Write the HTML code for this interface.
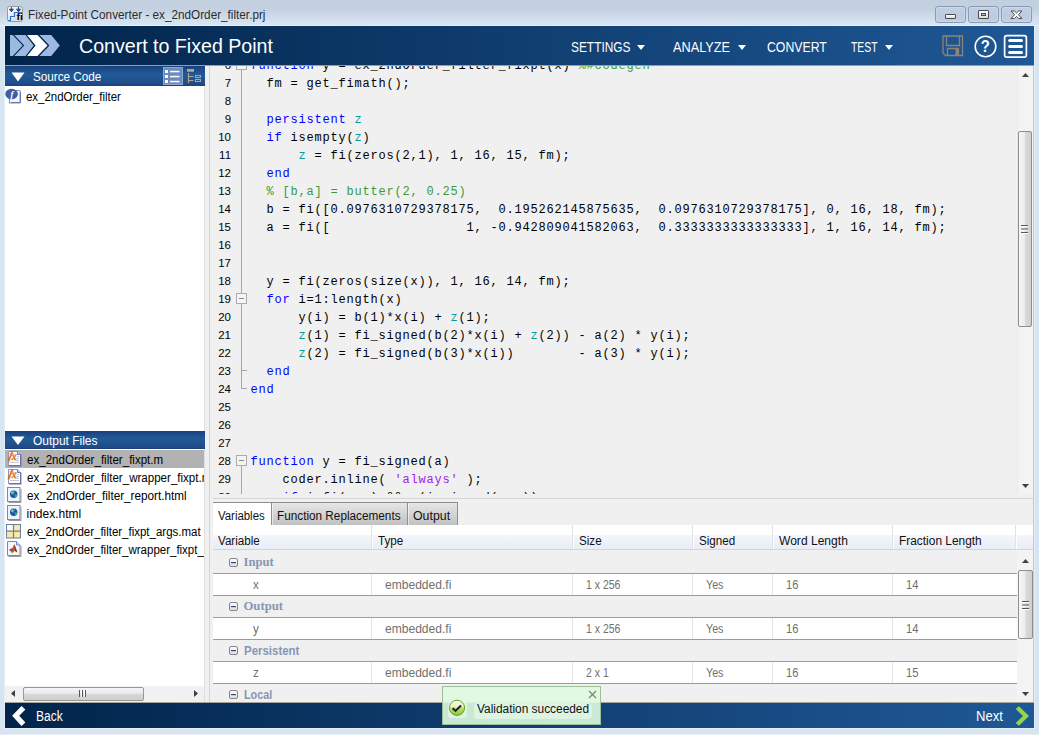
<!DOCTYPE html>
<html><head><meta charset="utf-8"><title>Fixed-Point Converter</title>
<style>
*{box-sizing:border-box}
html,body{margin:0;padding:0}
body{width:1039px;height:735px;overflow:hidden;position:relative;background:#d7e4f2;font-family:"Liberation Sans", sans-serif;font-size:12px;color:#000}
.abs{position:absolute}
.t{position:absolute;white-space:pre;transform-origin:0 50%;line-height:1}
#titlebar{left:0;top:0;width:1039px;height:26px;background:linear-gradient(#c2cfde 0px,#c4d1e0 10px,#c9d6e6 13px,#d3dfee 20px,#d8e5f2 25px,#e6eef8 25px,#e6eef8 26px)}
#toolbar{left:5px;top:26px;width:1029px;height:39px;background:linear-gradient(90deg,#01244a 0%,#1f5896 100%)}
#tbline{left:5px;top:65px;width:1029px;height:1px;background:#9c9c9a}
#content{left:5px;top:66px;width:1029px;height:637px;background:#f0f0f0}
#bottombar{left:5px;top:703px;width:1029px;height:25px;background:linear-gradient(90deg,#01244a 0%,#1f5896 100%)}
#bbline{left:5px;top:702px;width:1029px;height:1px;background:#a9a59c}
.wbtn{position:absolute;top:6px;width:31px;height:17px;border:1px solid #8b9bb7;border-radius:3px;background:linear-gradient(#c2d0e3,#bccbe0 60%,#c0cee3);box-shadow:inset 0 0 0 1px rgba(255,255,255,.18)}
.hdr{position:absolute;left:5px;width:200px;background:linear-gradient(#1b3f7c 0,#1f4e8d 22%,#1f5b99 42%,#1f5593 60%,#1f4a87 92%,#163d7a 100%)}
.hdr .t{color:#fff;font-size:13px}
.lp{position:absolute;left:5px;width:200px;background:#fff}
.file{position:absolute;left:5px;width:200px;height:18px;overflow:hidden}
.file .t{left:21.500px;top:4px;font-size:12px}
.tbt{color:#fff;font-size:14px}
.code{font-family:"Liberation Mono", monospace;font-size:12px;letter-spacing:.799px;position:absolute;left:250.5px;white-space:pre;line-height:18px;height:18px;color:#000}
.ln{position:absolute;width:30px;left:201.5px;text-align:right;font-size:11px;line-height:18px;height:18px;color:#000;transform:scaleX(1.04);transform-origin:100% 50%}
.k{color:#0000ff} .p{color:#0a9a9a} .c{color:#3a9a3a} .s{color:#a020f0}
</style></head>
<body>
<div id="titlebar" class="abs"></div>
<div class="abs" style="left:4px;top:26px;width:1031px;height:703px;background:#e5edf7"></div>
<div class="abs" style="left:0;top:734px;width:1039px;height:1px;background:#e8ecf2"></div>
<svg class="abs" style="left:7px;top:6px" width="16" height="16" viewBox="0 0 16 16">
<defs><linearGradient id="ig" x1="0" y1="0" x2="1" y2="1"><stop offset="0" stop-color="#ffffff"/><stop offset="1" stop-color="#d4d4d4"/></linearGradient></defs>
<rect x="0.5" y="0.5" width="15" height="15" rx="2" fill="url(#ig)" stroke="#9a9a9a"/>
<path d="M1 14.5H3.5V10.5H7.5V6.5H15" fill="none" stroke="#2f6fcf" stroke-width="1.2"/>
<path d="M4.4 1v3M2.4 3.2h4l-2 2.6z M11.5 1v3M9.5 3.2h4l-2 2.6z" fill="#1f4e8c" stroke="#1f4e8c" stroke-width="1"/>
<g transform="translate(9.500,13.900) scale(1.250,1)" font-family="Liberation Sans, sans-serif" font-weight="700" font-size="8.300" fill="#000"><text x="0" y="0">f</text><text x="2.800" y="0">i</text></g>
</svg>
<div class="t" id="title" style="left:27.500px;top:9px;font-size:12px;color:#2b2b2b;transform:scaleX(.978)">Fixed-Point Converter - ex_2ndOrder_filter.prj</div>
<div class="wbtn" style="left:935px"><div class="abs" style="left:9px;top:7px;width:11px;height:5px;background:linear-gradient(#fff,#dcdcdc);border:1px solid #4b4b4b;border-radius:1px"></div></div>
<div class="wbtn" style="left:968px"><div class="abs" style="left:9px;top:3px;width:11px;height:9px;background:linear-gradient(#fff,#dcdcdc);border:1px solid #4b4b4b;border-radius:1px"></div><div class="abs" style="left:12px;top:6px;width:5px;height:3px;background:#b9c9e0;border:1px solid #4b4b4b"></div></div>
<div class="wbtn" style="left:1001px"><svg class="abs" style="left:8px;top:3px" width="13" height="10" viewBox="0 0 13 10"><path d="M1 1h3.400l2.100 2L8.600 1H12L8.400 4.700 12 8.500H8.600L6.500 6.400 4.400 8.500H1L4.600 4.700z" fill="#fff" stroke="#4b4b4b" stroke-width="1" stroke-linejoin="round"/></svg></div>
<div id="toolbar" class="abs"></div>
<div id="tbline" class="abs"></div>
<svg class="abs" style="left:5px;top:26px" width="70" height="39" viewBox="5 26 70 39">
<polygon points="10,35 12.700,35 22.700,45.5 12.700,56 10,56" fill="#9db9e1"/>
<polygon points="14.200,35 25.500,35 33.800,45.5 25.500,56 14.200,56 24.200,45.5" fill="#9db9e1"/>
<polygon points="27,35 37.500,35 47.500,45.5 37.500,56 27,56 35.600,45.5" fill="#ffffff"/>
<polygon points="39.400,35 51.200,35 59.800,45.5 51.200,56 39.400,56 49.400,45.5" fill="#9db9e1"/>
</svg>
<div class="t" id="ctfp" style="left:78.600px;top:36px;font-size:20px;color:#fff;transform:scaleX(.98)">Convert to Fixed Point</div>
<div class="t tbt" id="m1" style="left:570.700px;top:40px;transform:scaleX(.85)">SETTINGS</div>
<svg class="abs" style="left:637px;top:45px" width="8" height="5" viewBox="0 0 8 5"><polygon points="0,0 8,0 4.0,5" fill="#fff"/></svg>
<div class="t tbt" id="m2" style="left:672.500px;top:40px;transform:scaleX(.91)">ANALYZE</div>
<svg class="abs" style="left:738px;top:45px" width="8" height="5" viewBox="0 0 8 5"><polygon points="0,0 8,0 4.0,5" fill="#fff"/></svg>
<div class="t tbt" id="m3" style="left:767px;top:40px;transform:scaleX(.877)">CONVERT</div>
<div class="t tbt" id="m4" style="left:850.500px;top:40px;transform:scaleX(.74)">TEST</div>
<svg class="abs" style="left:885px;top:45px" width="8" height="5" viewBox="0 0 8 5"><polygon points="0,0 8,0 4.0,5" fill="#fff"/></svg>
<svg class="abs" style="left:942.300px;top:34.800px" width="22" height="22" viewBox="0 0 22 22">
<path d="M1 1h19.500v19.500H3.500L1 18z" fill="none" stroke="#8a8578" stroke-width="1.300"/>
<path d="M4.500 1v9.500h13V1" fill="none" stroke="#8a8578" stroke-width="1.300"/>
<path d="M5.500 20.500V13.500h11v7" fill="none" stroke="#8a8578" stroke-width="1.300"/>
<rect x="13.500" y="13.500" width="3" height="7" fill="#8a8578"/>
</svg>
<svg class="abs" style="left:973px;top:34px" width="25" height="25" viewBox="0 0 25 25">
<circle cx="12.500" cy="12.500" r="10.300" fill="none" stroke="#fff" stroke-width="1.600"/>
<text x="13.700" y="18.200" text-anchor="middle" font-family="Liberation Sans, sans-serif" font-weight="700" font-size="16.500" fill="#fff" transform="scale(.9,1)">?</text>
</svg>
<svg class="abs" style="left:1003px;top:34px" width="25" height="25" viewBox="0 0 25 25">
<rect x="1.600" y="1.600" width="21.800" height="21.600" rx="2.200" fill="none" stroke="#fff" stroke-width="1.700"/>
<rect x="5.200" y="5.100" width="14.800" height="3" rx="1.500" fill="#fff"/>
<rect x="5.200" y="11.100" width="14.800" height="3" rx="1.500" fill="#fff"/>
<rect x="5.200" y="17.100" width="14.800" height="3" rx="1.500" fill="#fff"/>
</svg>
<div id="content" class="abs"></div>
<div class="lp" style="top:86px;height:345px"></div>
<div class="lp" style="top:449px;height:237px"></div>
<div class="hdr" id="h1" style="top:66px;height:20px"><div class="t" style="left:28px;top:4px;transform:scaleX(.9)">Source Code</div><svg class="abs" style="left:6px;top:6px" width="14" height="10" viewBox="0 0 14 10"><polygon points="0.500,0.500 13.500,0.500 7,9.500" fill="#fff"/></svg></div>
<svg class="abs" style="left:163px;top:67px" width="20" height="18" viewBox="0 0 20 18">
<rect x="0.500" y="0.500" width="19" height="17" fill="#6d8cbe" stroke="#8fa8d0"/>
<rect x="2" y="3" width="3" height="3" fill="#fff"/><rect x="2" y="8" width="3" height="3" fill="#fff"/><rect x="2" y="13" width="3" height="3" fill="#fff"/>
<rect x="7" y="3.800" width="9.500" height="1.500" fill="#fff"/><rect x="7" y="8.800" width="9.500" height="1.500" fill="#fff"/><rect x="7" y="13.800" width="9.500" height="1.500" fill="#fff"/>
</svg>
<svg class="abs" style="left:186px;top:68px" width="17" height="16" viewBox="0 0 17 16">
<rect x="1" y="1" width="7" height="2.800" fill="#b3a58d"/>
<path d="M2.500 5v10M2.500 8.500h5M2.500 12.500h5" stroke="#b3a58d" stroke-width="1.200" fill="none"/>
<rect x="9.500" y="7.500" width="5" height="2" fill="none" stroke="#b3a58d" stroke-width="1"/>
<rect x="9.500" y="11.500" width="5" height="2" fill="none" stroke="#b3a58d" stroke-width="1"/>
</svg>
<svg class="abs" style="left:5px;top:88px" width="17" height="16" viewBox="0 0 17 16">
<rect x="4.500" y="2.500" width="10.500" height="12.500" fill="#f4f7fd" stroke="#8a90c8"/>
<path d="M6 14.500h9.500V4" stroke="#6d74a8" stroke-width="1" fill="none"/>
<ellipse cx="6.600" cy="6" rx="6.300" ry="5.200" fill="#3f5ca8"/>
<text x="5.400" y="9.100" font-family="Liberation Serif, serif" font-style="italic" font-weight="700" font-size="9" fill="#fff">f</text>
</svg>
<div class="t" id="src1" style="left:25.500px;top:90.500px;font-size:12px;transform:scaleX(.955)">ex_2ndOrder_filter</div>
<div class="hdr" id="h2" style="top:431px;height:18px"><div class="t" style="left:28px;top:3px;transform:scaleX(.92)">Output Files</div><svg class="abs" style="left:6px;top:5px" width="14" height="10" viewBox="0 0 14 10"><polygon points="0.500,0.500 13.500,0.500 7,9" fill="#fff"/></svg></div>
<div class="file" style="top:450px;background:#b2b2b2;"><svg class="abs" style="left:0;top:1px" width="17" height="16" viewBox="0 0 17 16">
<path d="M3.500 0.500H12.500L15.500 3.500V14.500H3.500z" fill="#ffffff" stroke="#8d93c6"/>
<path d="M12.500 0.500V3.500H15.500" fill="#cfd6f0" stroke="#6a6fae"/>
<path d="M15.700 3.500V14.800H3.800" fill="none" stroke="#6a6fae" stroke-width="1.400"/>
<path d="M8.500 3.500H12M12 5.500H14M10.500 7.500H14M10.500 9.500H14M5 11.500H14" stroke="#c4c6cf" stroke-width="1"/>
<text x="0" y="0" transform="translate(3.200,8.400) skewX(-12)" font-family="Liberation Serif, serif" font-style="italic" font-weight="700" font-size="12" fill="#e8700a" stroke="#e8700a" stroke-width="0.200">f</text>
<text x="6.800" y="9.200" font-family="Liberation Serif, serif" font-style="italic" font-weight="700" font-size="9.500" fill="#e8700a" stroke="#e8700a" stroke-width="0.300">x</text>
</svg><div class="t f0" style="transform:scaleX(0.963)">ex_2ndOrder_filter_fixpt.m</div></div>
<div class="file" style="top:468px;"><svg class="abs" style="left:0;top:1px" width="17" height="16" viewBox="0 0 17 16">
<path d="M3.500 0.500H12.500L15.500 3.500V14.500H3.500z" fill="#ffffff" stroke="#8d93c6"/>
<path d="M12.500 0.500V3.500H15.500" fill="#cfd6f0" stroke="#6a6fae"/>
<path d="M15.700 3.500V14.800H3.800" fill="none" stroke="#6a6fae" stroke-width="1.400"/>
<path d="M8.500 3.500H12M12 5.500H14M10.500 7.500H14M10.500 9.500H14M5 11.500H14" stroke="#c4c6cf" stroke-width="1"/>
<text x="0" y="0" transform="translate(3.200,8.400) skewX(-12)" font-family="Liberation Serif, serif" font-style="italic" font-weight="700" font-size="12" fill="#e8700a" stroke="#e8700a" stroke-width="0.200">f</text>
<text x="6.800" y="9.200" font-family="Liberation Serif, serif" font-style="italic" font-weight="700" font-size="9.500" fill="#e8700a" stroke="#e8700a" stroke-width="0.300">x</text>
</svg><div class="t f1" style="transform:scaleX(0.963)">ex_2ndOrder_filter_wrapper_fixpt.m</div></div>
<div class="file" style="top:486px;"><svg class="abs" style="left:0;top:1px" width="17" height="16" viewBox="0 0 17 16">
<rect x="2.500" y="0.500" width="12.500" height="14" fill="#eef3fc" stroke="#6f88c9"/>
<path d="M3.500 15.500h12.500V2" stroke="#9a9aa4" stroke-width="1" fill="none"/>
<circle cx="8.700" cy="7.300" r="3.700" fill="#1a50c0"/>
<path d="M5.800 5.600q1.600-2 3.600-1.400q.8 1.200-.4 2.200q-.4 1.600-1.600 1.200q-1.400-.2-1.600-2z M9.600 7.600q1.800-.6 2.600.2q-.2 2-1.800 2.600q-1-.8-.8-2.800z M6.400 9.400q1 .2 1.400 1.400q-1-.2-1.400-1.400z" fill="#3fb04a"/>
<circle cx="7.300" cy="5.700" r="1.100" fill="#cfe8ff" opacity=".55"/>
</svg><div class="t f2" style="transform:scaleX(0.977)">ex_2ndOrder_filter_report.html</div></div>
<div class="file" style="top:504px;"><svg class="abs" style="left:0;top:1px" width="17" height="16" viewBox="0 0 17 16">
<rect x="2.500" y="0.500" width="12.500" height="14" fill="#eef3fc" stroke="#6f88c9"/>
<path d="M3.500 15.500h12.500V2" stroke="#9a9aa4" stroke-width="1" fill="none"/>
<circle cx="8.700" cy="7.300" r="3.700" fill="#1a50c0"/>
<path d="M5.800 5.600q1.600-2 3.600-1.400q.8 1.200-.4 2.200q-.4 1.600-1.600 1.200q-1.400-.2-1.600-2z M9.600 7.600q1.800-.6 2.600.2q-.2 2-1.800 2.600q-1-.8-.8-2.800z M6.400 9.400q1 .2 1.400 1.400q-1-.2-1.400-1.400z" fill="#3fb04a"/>
<circle cx="7.300" cy="5.700" r="1.100" fill="#cfe8ff" opacity=".55"/>
</svg><div class="t f3" style="transform:scaleX(1.0)">index.html</div></div>
<div class="file" style="top:522px;"><svg class="abs" style="left:0;top:1px" width="17" height="16" viewBox="0 0 17 16">
<rect x="1.500" y="1.500" width="14" height="13.500" fill="#fbe9a2" stroke="#6b7fa6"/>
<rect x="2" y="2" width="6.500" height="6" fill="#fdfbf0"/>
<path d="M8.500 1.500v13.500M1.500 8.200h14" stroke="#6b7fa6" stroke-width="1.200"/>
</svg><div class="t f4" style="transform:scaleX(0.957)">ex_2ndOrder_filter_fixpt_args.mat</div></div>
<div class="file" style="top:540px;"><svg class="abs" style="left:0;top:1px" width="17" height="16" viewBox="0 0 17 16">
<path d="M2.500 0.500h9l3.500 3.500V14.500h-12.500z" fill="#f3f7fd" stroke="#6f88c9"/>
<path d="M11.500 0.500v3.500h3.500" fill="#dfe8f8" stroke="#6f88c9"/>
<path d="M3.500 15.500h12.500V5" stroke="#9a9aa4" stroke-width="1" fill="none"/>
<path d="M4 8.800l3.200-1.600 2.200-4 3 8.400-2.800-1.800-2.200 2.400z" fill="#d9541e"/>
<path d="M9.400 3.200l3 8.400-2.800-1.800z" fill="#8f3a14"/>
<path d="M4 8.800l3.200-1.600 1.200 3z" fill="#2f6fb8"/>
</svg><div class="t f5" style="transform:scaleX(0.957)">ex_2ndOrder_filter_wrapper_fixpt_mex.mexw64</div></div>
<div class="abs" style="left:5px;top:686px;width:200px;height:16px;background:#f1f1f1"></div>
<svg class="abs" style="left:10.500px;top:690px" width="4" height="7" viewBox="0 0 4 7"><polygon points="4,0 4,7 0,3.500" fill="#404040"/></svg>
<svg class="abs" style="left:193.500px;top:690px" width="4" height="7" viewBox="0 0 4 7"><polygon points="0,0 0,7 4,3.500" fill="#404040"/></svg>
<div class="abs" style="left:23px;top:686.500px;width:120.500px;height:14px;border:1px solid #979797;border-radius:2px;background:linear-gradient(#f6f6f6,#e9e9e9 45%,#d6d6d6 55%,#cfcfcf)"></div>
<div class="abs" style="left:79px;top:690px;width:1px;height:7px;background:#555;box-shadow:2px 0 0 #fff,3px 0 0 #555,5px 0 0 #fff,6px 0 0 #555"></div>
<div class="abs" style="left:204px;top:86px;width:1px;height:345px;background:#dedede"></div>
<div class="abs" style="left:204px;top:449px;width:1px;height:253px;background:#dedede"></div>
<div class="abs" style="left:209px;top:66px;width:1px;height:637px;background:#d4d4d4"></div>
<div class="abs" id="editor" style="left:210px;top:66px;width:807px;height:428px;overflow:hidden;background:#f0f0f0">
<div class="ln" style="left:-9px;top:-10.5px">6</div>
<div class="code" style="left:40.500px;top:-9.5px"><span class="k">function</span> y = ex_2ndOrder_filter_fixpt(x) <span class="c">%#codegen</span></div>
<div class="ln" style="left:-9px;top:7.5px">7</div>
<div class="code" style="left:40.500px;top:8.5px">  fm = get_fimath();</div>
<div class="ln" style="left:-9px;top:25.5px">8</div>
<div class="ln" style="left:-9px;top:43.5px">9</div>
<div class="code" style="left:40.500px;top:44.5px">  <span class="k">persistent</span> <span class="p">z</span></div>
<div class="ln" style="left:-9px;top:61.5px">10</div>
<div class="code" style="left:40.500px;top:62.5px">  <span class="k">if</span> isempty(<span class="p">z</span>)</div>
<div class="ln" style="left:-9px;top:79.5px">11</div>
<div class="code" style="left:40.500px;top:80.5px">      <span class="p">z</span> = fi(zeros(2,1), 1, 16, 15, fm);</div>
<div class="ln" style="left:-9px;top:97.5px">12</div>
<div class="code" style="left:40.500px;top:98.5px">  <span class="k">end</span></div>
<div class="ln" style="left:-9px;top:115.5px">13</div>
<div class="code" style="left:40.500px;top:116.5px">  <span class="c">% [b,a] = butter(2, 0.25)</span></div>
<div class="ln" style="left:-9px;top:133.5px">14</div>
<div class="code" style="left:40.500px;top:134.5px">  b = fi([0.0976310729378175,  0.195262145875635,  0.0976310729378175], 0, 16, 18, fm);</div>
<div class="ln" style="left:-9px;top:151.5px">15</div>
<div class="code" style="left:40.500px;top:152.5px">  a = fi([                 1, -0.942809041582063,  0.3333333333333333], 1, 16, 14, fm);</div>
<div class="ln" style="left:-9px;top:169.5px">16</div>
<div class="ln" style="left:-9px;top:187.5px">17</div>
<div class="ln" style="left:-9px;top:205.5px">18</div>
<div class="code" style="left:40.500px;top:206.5px">  y = fi(zeros(size(x)), 1, 16, 14, fm);</div>
<div class="ln" style="left:-9px;top:223.5px">19</div>
<div class="code" style="left:40.500px;top:224.5px">  <span class="k">for</span> i=1:length(x)</div>
<div class="ln" style="left:-9px;top:241.5px">20</div>
<div class="code" style="left:40.500px;top:242.5px">      y(i) = b(1)*x(i) + <span class="p">z</span>(1);</div>
<div class="ln" style="left:-9px;top:259.5px">21</div>
<div class="code" style="left:40.500px;top:260.5px">      <span class="p">z</span>(1) = fi_signed(b(2)*x(i) + <span class="p">z</span>(2)) - a(2) * y(i);</div>
<div class="ln" style="left:-9px;top:277.5px">22</div>
<div class="code" style="left:40.500px;top:278.5px">      <span class="p">z</span>(2) = fi_signed(b(3)*x(i))        - a(3) * y(i);</div>
<div class="ln" style="left:-9px;top:295.5px">23</div>
<div class="code" style="left:40.500px;top:296.5px">  <span class="k">end</span></div>
<div class="ln" style="left:-9px;top:313.5px">24</div>
<div class="code" style="left:40.500px;top:314.5px"><span class="k">end</span></div>
<div class="ln" style="left:-9px;top:331.5px">25</div>
<div class="ln" style="left:-9px;top:349.5px">26</div>
<div class="ln" style="left:-9px;top:367.5px">27</div>
<div class="ln" style="left:-9px;top:385.5px">28</div>
<div class="code" style="left:40.500px;top:386.5px"><span class="k">function</span> y = fi_signed(a)</div>
<div class="ln" style="left:-9px;top:403.5px">29</div>
<div class="code" style="left:40.500px;top:404.5px">    coder.inline( <span class="s">'always'</span> );</div>
<div class="ln" style="left:-9px;top:421.5px">30</div>
<div class="code" style="left:40.500px;top:422.5px">    <span class="k">if</span> isfi( a ) &amp;&amp; ~(issigned( a ))</div>
<div class="abs" style="left:31px;top:0px;width:1px;height:323px;background:#a6a6a6"></div>
<div class="abs" style="left:31px;top:304px;width:6px;height:1px;background:#a6a6a6"></div>
<div class="abs" style="left:31px;top:322px;width:6px;height:1px;background:#a6a6a6"></div>
<div class="abs" style="left:26px;top:-7px;width:11px;height:11px;border:1px solid #ababab;background:#f4f4f4"><div class="abs" style="left:2px;top:4px;width:5px;height:1px;background:#8a8a8a"></div></div>
<div class="abs" style="left:26px;top:227px;width:11px;height:11px;border:1px solid #ababab;background:#f4f4f4"><div class="abs" style="left:2px;top:4px;width:5px;height:1px;background:#8a8a8a"></div></div>
<div class="abs" style="left:31px;top:400px;width:1px;height:40px;background:#a6a6a6"></div>
<div class="abs" style="left:26px;top:389px;width:11px;height:11px;border:1px solid #ababab;background:#f4f4f4"><div class="abs" style="left:2px;top:4px;width:5px;height:1px;background:#8a8a8a"></div></div>
</div>
<div class="abs" style="left:1017px;top:66px;width:17px;height:428px;background:#f3f3f3;border-left:1px solid #e9e9e9"></div>
<svg class="abs" style="left:1022px;top:73px" width="7" height="4" viewBox="0 0 7 4"><polygon points="0,4 7,4 3.500,0" fill="#404040"/></svg>
<svg class="abs" style="left:1022px;top:484px" width="7" height="4" viewBox="0 0 7 4"><polygon points="0,0 7,0 3.500,4" fill="#404040"/></svg>
<div class="abs" style="left:1017.500px;top:131px;width:14.500px;height:196px;border:1px solid #8e8e8e;border-radius:2px;background:linear-gradient(90deg,#f7f7f7,#ececec 45%,#d9d9d9 55%,#cfcfcf)"></div>
<div class="abs" style="left:1021px;top:224.500px;width:7px;height:1px;background:#555;box-shadow:0 1px 0 #fff,0 3.500px 0 #555,0 4.500px 0 #fff,0 7px 0 #555,0 8px 0 #fff"></div>
<div class="abs" style="left:213px;top:498px;width:820px;height:1px;background:#d6d6d6"></div>
<div class="abs" style="left:213px;top:502px;width:244.500px;height:23px;border-top:1px solid #8f8f8f;background:linear-gradient(#e6e6e6,#c2c2c2)"></div>
<div class="abs" style="left:213px;top:503px;width:58px;height:22px;background:#fff"></div>
<div class="abs" style="left:270.500px;top:502px;width:1px;height:23px;background:#8f8f8f"></div>
<div class="abs" style="left:406.500px;top:502px;width:1px;height:23px;background:#8f8f8f"></div>
<div class="abs" style="left:457px;top:502px;width:1px;height:23px;background:#8f8f8f"></div>
<div class="abs" style="left:271.500px;top:503px;width:1px;height:22px;background:rgba(255,255,255,.55)"></div>
<div class="abs" style="left:407.500px;top:503px;width:1px;height:22px;background:rgba(255,255,255,.55)"></div>
<div class="t" id="tab1" style="left:218px;top:509.500px;font-size:12px;color:#111;transform:scaleX(.95)">Variables</div>
<div class="t" id="tab2" style="left:277px;top:509.500px;font-size:12px;color:#111;transform:scaleX(.98)">Function Replacements</div>
<div class="t" id="tab3" style="left:413px;top:509.500px;font-size:12px;color:#111;transform:scaleX(1.03)">Output</div>
<div class="abs" style="left:213px;top:525px;width:820px;height:24px;background:linear-gradient(#ffffff 0,#ffffff 40%,#f3f5fb 44%,#e9edf7 100%)"></div>
<div class="abs" style="left:213px;top:549px;width:820px;height:1px;background:#d5d5d5"></div>
<div class="t th0" style="left:218px;top:534.500px;font-size:12px;color:#111;transform:scaleX(0.97)">Variable</div>
<div class="t th1" style="left:378px;top:534.500px;font-size:12px;color:#111;transform:scaleX(0.97)">Type</div>
<div class="t th2" style="left:579px;top:534.500px;font-size:12px;color:#111;transform:scaleX(0.97)">Size</div>
<div class="t th3" style="left:699px;top:534.500px;font-size:12px;color:#111;transform:scaleX(0.97)">Signed</div>
<div class="t th4" style="left:779px;top:534.500px;font-size:12px;color:#111;transform:scaleX(1.005)">Word Length</div>
<div class="t th5" style="left:899px;top:534.500px;font-size:12px;color:#111;transform:scaleX(0.992)">Fraction Length</div>
<div class="abs" style="left:371px;top:525px;width:1px;height:24px;background:#e2e2e6"></div><div class="abs" style="left:372px;top:525px;width:1px;height:24px;background:#fff"></div>
<div class="abs" style="left:572px;top:525px;width:1px;height:24px;background:#e2e2e6"></div><div class="abs" style="left:573px;top:525px;width:1px;height:24px;background:#fff"></div>
<div class="abs" style="left:692px;top:525px;width:1px;height:24px;background:#e2e2e6"></div><div class="abs" style="left:693px;top:525px;width:1px;height:24px;background:#fff"></div>
<div class="abs" style="left:772px;top:525px;width:1px;height:24px;background:#e2e2e6"></div><div class="abs" style="left:773px;top:525px;width:1px;height:24px;background:#fff"></div>
<div class="abs" style="left:892px;top:525px;width:1px;height:24px;background:#e2e2e6"></div><div class="abs" style="left:893px;top:525px;width:1px;height:24px;background:#fff"></div>
<div class="abs" style="left:1015px;top:525px;width:1px;height:24px;background:#e2e2e6"></div><div class="abs" style="left:1016px;top:525px;width:1px;height:24px;background:#fff"></div>
<div class="abs" id="tbody" style="left:213px;top:550px;width:804px;height:152px;overflow:hidden;background:#f0f0f0">
<svg class="abs" width="0" height="0" style="left:0;top:0"><defs><linearGradient id="mg" x1="0" y1="0" x2="0" y2="1"><stop offset="0" stop-color="#fff"/><stop offset="1" stop-color="#dcdcdc"/></linearGradient></defs></svg>
<div class="abs" style="left:0;top:0px;width:804px;height:23px"><svg class="abs" style="left:16px;top:8px" width="9" height="9" viewBox="0 0 9 9"><rect x="0.500" y="0.500" width="8" height="8" rx="1.500" fill="url(#mg)" stroke="#868686"/><rect x="2" y="4" width="5" height="1.200" fill="#2b4c8c"/></svg><div class="t grp" style="left:30.500px;top:6px;font-family:'Liberation Serif',serif;font-weight:700;font-size:12.700px;color:#8797b2">Input</div></div>
<div class="abs" style="left:0;top:23px;width:804px;height:1px;background:#9c9c9c"></div>
<div class="abs" style="left:0;top:24px;width:804px;height:21px;background:#fff">
<div class="t td" style="left:40px;top:5px;font-size:12px;color:#707070;transform:scaleX(0.97)">x</div>
<div class="t td" style="left:172px;top:5px;font-size:12px;color:#707070;transform:scaleX(1.005)">embedded.fi</div>
<div class="abs" style="left:158px;top:0;width:1px;height:21px;background:#e4e4e4"></div>
<div class="t td" style="left:373px;top:5px;font-size:12px;color:#707070;transform:scaleX(0.875)">1 x 256</div>
<div class="abs" style="left:359px;top:0;width:1px;height:21px;background:#e4e4e4"></div>
<div class="t td" style="left:493px;top:5px;font-size:12px;color:#707070;transform:scaleX(0.89)">Yes</div>
<div class="abs" style="left:479px;top:0;width:1px;height:21px;background:#e4e4e4"></div>
<div class="t td" style="left:573px;top:5px;font-size:12px;color:#707070;transform:scaleX(0.93)">16</div>
<div class="abs" style="left:559px;top:0;width:1px;height:21px;background:#e4e4e4"></div>
<div class="t td" style="left:693px;top:5px;font-size:12px;color:#707070;transform:scaleX(0.93)">14</div>
<div class="abs" style="left:679px;top:0;width:1px;height:21px;background:#e4e4e4"></div>
</div>
<div class="abs" style="left:0;top:45px;width:804px;height:1px;background:#9c9c9c"></div>
<div class="abs" style="left:0;top:44px;width:804px;height:23px"><svg class="abs" style="left:16px;top:8px" width="9" height="9" viewBox="0 0 9 9"><rect x="0.500" y="0.500" width="8" height="8" rx="1.500" fill="url(#mg)" stroke="#868686"/><rect x="2" y="4" width="5" height="1.200" fill="#2b4c8c"/></svg><div class="t grp" style="left:30.500px;top:6px;font-family:'Liberation Serif',serif;font-weight:700;font-size:12.700px;color:#8797b2">Output</div></div>
<div class="abs" style="left:0;top:67px;width:804px;height:1px;background:#9c9c9c"></div>
<div class="abs" style="left:0;top:68px;width:804px;height:21px;background:#fff">
<div class="t td" style="left:40px;top:5px;font-size:12px;color:#707070;transform:scaleX(0.97)">y</div>
<div class="t td" style="left:172px;top:5px;font-size:12px;color:#707070;transform:scaleX(1.005)">embedded.fi</div>
<div class="abs" style="left:158px;top:0;width:1px;height:21px;background:#e4e4e4"></div>
<div class="t td" style="left:373px;top:5px;font-size:12px;color:#707070;transform:scaleX(0.875)">1 x 256</div>
<div class="abs" style="left:359px;top:0;width:1px;height:21px;background:#e4e4e4"></div>
<div class="t td" style="left:493px;top:5px;font-size:12px;color:#707070;transform:scaleX(0.89)">Yes</div>
<div class="abs" style="left:479px;top:0;width:1px;height:21px;background:#e4e4e4"></div>
<div class="t td" style="left:573px;top:5px;font-size:12px;color:#707070;transform:scaleX(0.93)">16</div>
<div class="abs" style="left:559px;top:0;width:1px;height:21px;background:#e4e4e4"></div>
<div class="t td" style="left:693px;top:5px;font-size:12px;color:#707070;transform:scaleX(0.93)">14</div>
<div class="abs" style="left:679px;top:0;width:1px;height:21px;background:#e4e4e4"></div>
</div>
<div class="abs" style="left:0;top:89px;width:804px;height:1px;background:#9c9c9c"></div>
<div class="abs" style="left:0;top:88px;width:804px;height:23px"><svg class="abs" style="left:16px;top:8px" width="9" height="9" viewBox="0 0 9 9"><rect x="0.500" y="0.500" width="8" height="8" rx="1.500" fill="url(#mg)" stroke="#868686"/><rect x="2" y="4" width="5" height="1.200" fill="#2b4c8c"/></svg><div class="t grp" style="left:30.500px;top:6.500px;font-family:'Liberation Sans',sans-serif;font-weight:700;font-size:12px;color:#8797b2;transform:scaleX(0.955)">Persistent</div></div>
<div class="abs" style="left:0;top:111px;width:804px;height:1px;background:#9c9c9c"></div>
<div class="abs" style="left:0;top:112px;width:804px;height:21px;background:#fff">
<div class="t td" style="left:40px;top:5px;font-size:12px;color:#707070;transform:scaleX(0.97)">z</div>
<div class="t td" style="left:172px;top:5px;font-size:12px;color:#707070;transform:scaleX(1.005)">embedded.fi</div>
<div class="abs" style="left:158px;top:0;width:1px;height:21px;background:#e4e4e4"></div>
<div class="t td" style="left:373px;top:5px;font-size:12px;color:#707070;transform:scaleX(0.875)">2 x 1</div>
<div class="abs" style="left:359px;top:0;width:1px;height:21px;background:#e4e4e4"></div>
<div class="t td" style="left:493px;top:5px;font-size:12px;color:#707070;transform:scaleX(0.89)">Yes</div>
<div class="abs" style="left:479px;top:0;width:1px;height:21px;background:#e4e4e4"></div>
<div class="t td" style="left:573px;top:5px;font-size:12px;color:#707070;transform:scaleX(0.93)">16</div>
<div class="abs" style="left:559px;top:0;width:1px;height:21px;background:#e4e4e4"></div>
<div class="t td" style="left:693px;top:5px;font-size:12px;color:#707070;transform:scaleX(0.93)">15</div>
<div class="abs" style="left:679px;top:0;width:1px;height:21px;background:#e4e4e4"></div>
</div>
<div class="abs" style="left:0;top:133px;width:804px;height:1px;background:#9c9c9c"></div>
<div class="abs" style="left:0;top:132px;width:804px;height:23px"><svg class="abs" style="left:16px;top:8px" width="9" height="9" viewBox="0 0 9 9"><rect x="0.500" y="0.500" width="8" height="8" rx="1.500" fill="url(#mg)" stroke="#868686"/><rect x="2" y="4" width="5" height="1.200" fill="#2b4c8c"/></svg><div class="t grp" style="left:30.500px;top:6.500px;font-family:'Liberation Sans',sans-serif;font-weight:700;font-size:12px;color:#8797b2;transform:scaleX(0.9)">Local</div></div>
</div>
<div class="abs" style="left:1017px;top:550px;width:17px;height:152px;background:#f3f3f3"></div>
<svg class="abs" style="left:1022px;top:559px" width="7" height="4" viewBox="0 0 7 4"><polygon points="0,4 7,4 3.500,0" fill="#404040"/></svg>
<svg class="abs" style="left:1022px;top:692px" width="7" height="4" viewBox="0 0 7 4"><polygon points="0,0 7,0 3.500,4" fill="#404040"/></svg>
<div class="abs" style="left:1018px;top:570px;width:14.500px;height:68.500px;border:1px solid #8e8e8e;border-radius:2px;background:linear-gradient(90deg,#f7f7f7,#ececec 45%,#d9d9d9 55%,#cfcfcf)"></div>
<div class="abs" style="left:1022px;top:600.500px;width:7px;height:1px;background:#555;box-shadow:0 1px 0 #fff,0 3.500px 0 #555,0 4.500px 0 #fff,0 7px 0 #555,0 8px 0 #fff"></div>
<div class="abs" style="left:1033px;top:66px;width:1px;height:636px;background:#c9c9c9"></div>
<div id="bbline" class="abs"></div>
<div id="bottombar" class="abs"></div>
<svg class="abs" style="left:12px;top:706px" width="14" height="20" viewBox="0 0 14 20"><polygon points="0.100,9.800 9.500,0 13.400,3.400 7.200,9.800 13.400,16.600 9.500,19.900" fill="#fff"/></svg>
<div class="t" id="back" style="left:35.500px;top:708.500px;font-size:14px;color:#fff;transform:scaleX(.86)">Back</div>
<div class="t" id="next" style="left:976px;top:708.500px;font-size:14px;color:#fff;transform:scaleX(.935)">Next</div>
<svg class="abs" style="left:1015px;top:706px" width="15" height="20" viewBox="0 0 15 20"><polygon points="4,0.300 0.700,3 8,10 0.700,17 4,19.700 14,10" fill="#96d44b"/></svg>
<div class="abs" style="left:442px;top:686px;width:159px;height:39px;background:rgba(222,250,223,.91);border:1px solid rgba(150,185,150,.9)"></div>
<div class="abs" style="left:448px;top:702px;width:19px;height:16px;border-radius:3px;background:rgba(238,253,238,.55)"></div>
<div class="abs" style="left:474px;top:703px;width:118px;height:16px;border-radius:4px;background:rgba(238,253,238,.55)"></div>
<svg class="abs" style="left:448px;top:699px" width="18" height="18" viewBox="0 0 18 18">
<defs><linearGradient id="gg" x1="0" y1="0" x2="0" y2="1"><stop offset="0" stop-color="#fdfef8"/><stop offset="0.420" stop-color="#e6f4c4"/><stop offset="0.520" stop-color="#bce072"/><stop offset="1" stop-color="#8bc53c"/></linearGradient></defs>
<circle cx="9" cy="8.800" r="7.600" fill="url(#gg)" stroke="#62a524" stroke-width="1"/>
<path d="M4.600 9.300l2.900 2.600 5.500-5.500" fill="none" stroke="#222" stroke-width="2.100"/>
</svg>
<div class="t" id="toast" style="left:477px;top:702.500px;font-size:12px;color:#111;transform:scaleX(.99)">Validation succeeded</div>
<svg class="abs" style="left:588px;top:690px" width="9" height="9" viewBox="0 0 9 9"><path d="M1 1l7 7M8 1l-7 7" stroke="#808080" stroke-width="1.200" fill="none"/></svg>
</body></html>
